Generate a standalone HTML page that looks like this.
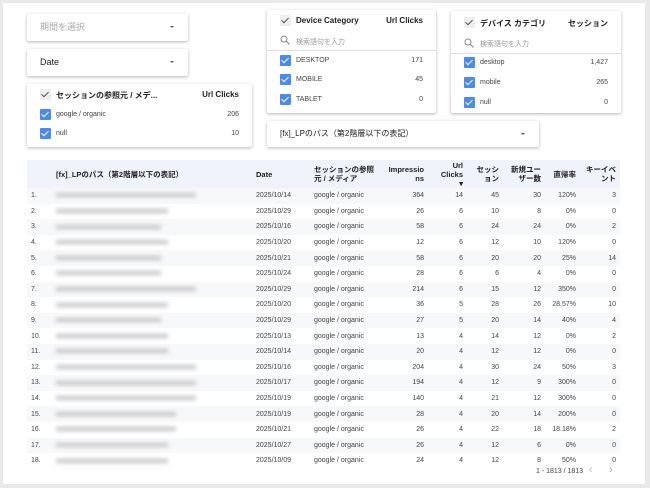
<!DOCTYPE html>
<html><head><meta charset="utf-8"><style>
*{box-sizing:border-box;margin:0;padding:0}
body{width:650px;height:488px;background:#e9e9e9;font-family:"Liberation Sans","Noto Sans CJK JP",sans-serif;position:relative;overflow:hidden;color:#222}
.page{position:absolute;left:3px;top:3px;width:642px;height:481px;background:#fff}
.card{position:absolute;background:#fff;box-shadow:0 1px 3px rgba(0,0,0,.3);border-radius:2px}
.dd{font-size:9px;padding-left:13px;line-height:27px}
.arr{position:absolute;right:14px;top:12px;width:0;height:0;border-left:2px solid transparent;border-right:2px solid transparent;border-top:2px solid #555}
.cb{position:absolute;width:11px;height:11px;background:#4a8af4;border-radius:1px}
.cb::after{content:"";position:absolute;left:3px;top:1px;width:3px;height:6px;border:solid #fff;border-width:0 1px 1px 0;transform:rotate(45deg)}
.hc{position:absolute;width:11px;height:11px;background:#eee}
.hc::after{content:"";position:absolute;left:3px;top:1px;width:3px;height:6px;border:solid #555;border-width:0 1px 1px 0;transform:rotate(45deg)}
.t{position:absolute;font-size:7px;color:#444;white-space:nowrap}
.h{position:absolute;font-size:8px;font-weight:bold;white-space:nowrap}
.s{position:absolute}
table{position:absolute;left:27px;top:160px;width:593px;border-collapse:collapse;font-size:7px;color:#444;table-layout:fixed}
th{background:#eef3fc;font-size:7.5px;color:#222;font-weight:bold;height:28px;text-align:right;padding-right:4px;line-height:9px;white-space:nowrap}
td{height:15.6px;text-align:right;padding-right:4px;white-space:nowrap}
tr:nth-child(even) td{background:#f7f8fa}
td.l,th.l{text-align:left;padding-left:4px}
.b{display:inline-block;height:4px;background:#c4c4c4;filter:blur(2px);vertical-align:middle}
</style></head><body>
<div class="page"></div>
<div class="card dd" style="left:27px;top:14px;width:161px;height:27px;color:#aaa">期間を選択<div class="arr"></div></div>
<div class="card dd" style="left:27px;top:49px;width:161px;height:27px">Date<div class="arr"></div></div>
<div class="card" style="left:27px;top:84px;width:225px;height:63px">
<div class="hc" style="left:13px;top:5px"></div><div class="h" style="left:29px;top:6px">セッションの参照元 / メデ...</div><div class="h" style="right:13px;top:6px">Url Clicks</div>
<div class="cb" style="left:13px;top:25px"></div><div class="t" style="left:29px;top:27px">google / organic</div><div class="t" style="right:13px;top:27px">206</div>
<div class="cb" style="left:13px;top:44px"></div><div class="t" style="left:29px;top:46px">null</div><div class="t" style="right:13px;top:46px">10</div>
</div>
<div class="card" style="left:267px;top:10px;width:169px;height:103px">
<div class="hc" style="left:13px;top:5px"></div><div class="h" style="left:29px;top:6px">Device Category</div><div class="h" style="right:13px;top:6px">Url Clicks</div>
<svg class="s" style="left:13px;top:25px" width="10" height="10" viewBox="0 0 10 10"><circle cx="4" cy="4" r="3" fill="none" stroke="#888" stroke-width="1"/><path d="M6.2 6.2L9.5 9.5" stroke="#888" stroke-width="1.1"/></svg>
<div class="t" style="left:29px;top:27px;color:#999">検索語句を入力</div>
<div style="position:absolute;left:0;right:0;top:40px;border-top:1px solid #ddd"></div>
<div class="cb" style="left:13px;top:45px"></div><div class="t" style="left:29px;top:47px">DESKTOP</div><div class="t" style="right:13px;top:47px">171</div>
<div class="cb" style="left:13px;top:64px"></div><div class="t" style="left:29px;top:66px">MOBILE</div><div class="t" style="right:13px;top:66px">45</div>
<div class="cb" style="left:13px;top:84px"></div><div class="t" style="left:29px;top:86px">TABLET</div><div class="t" style="right:13px;top:86px">0</div>
</div>
<div class="card" style="left:451px;top:11px;width:170px;height:102px">
<div class="hc" style="left:13px;top:6px"></div><div class="h" style="left:29px;top:7px">デバイス カテゴリ</div><div class="h" style="right:13px;top:7px">セッション</div>
<svg class="s" style="left:13px;top:27px" width="10" height="10" viewBox="0 0 10 10"><circle cx="4" cy="4" r="3" fill="none" stroke="#888" stroke-width="1"/><path d="M6.2 6.2L9.5 9.5" stroke="#888" stroke-width="1.1"/></svg>
<div class="t" style="left:29px;top:28px;color:#999">検索語句を入力</div>
<div style="position:absolute;left:0;right:0;top:42px;border-top:1px solid #ddd"></div>
<div class="cb" style="left:13px;top:46px"></div><div class="t" style="left:29px;top:48px">desktop</div><div class="t" style="right:13px;top:48px">1,427</div>
<div class="cb" style="left:13px;top:66px"></div><div class="t" style="left:29px;top:68px">mobile</div><div class="t" style="right:13px;top:68px">265</div>
<div class="cb" style="left:13px;top:86px"></div><div class="t" style="left:29px;top:88px">null</div><div class="t" style="right:13px;top:88px">0</div>
</div>
<div class="card dd" style="left:267px;top:121px;width:272px;height:26px;font-size:8px;line-height:26px">[fx]_LPのパス（第2階層以下の表記）<div class="arr"></div></div>
<table>
<colgroup><col style="width:25px"><col style="width:200px"><col style="width:58px"><col style="width:72px"><col style="width:46px"><col style="width:39px"><col style="width:36px"><col style="width:42px"><col style="width:35px"><col style="width:40px"></colgroup>
<tr><th></th><th class="l">[fx]_LPのパス（第2階層以下の表記）</th><th class="l">Date</th><th class="l">セッションの参照<br>元 / メディア</th><th>Impressio<br>ns</th><th>Url<br>Clicks<br>▾</th><th>セッシ<br>ョン</th><th>新規ユー<br>ザー数</th><th>直帰率</th><th>キーイベ<br>ント</th></tr>
<tr><td class="l">1.</td><td class="l"><span class="b" style="width:140px"></span></td><td class="l">2025/10/14</td><td class="l">google / organic</td><td>364</td><td>14</td><td>45</td><td>30</td><td>120%</td><td>3</td></tr>
<tr><td class="l">2.</td><td class="l"><span class="b" style="width:112px"></span></td><td class="l">2025/10/29</td><td class="l">google / organic</td><td>26</td><td>6</td><td>10</td><td>8</td><td>0%</td><td>0</td></tr>
<tr><td class="l">3.</td><td class="l"><span class="b" style="width:105px"></span></td><td class="l">2025/10/16</td><td class="l">google / organic</td><td>58</td><td>6</td><td>24</td><td>24</td><td>0%</td><td>2</td></tr>
<tr><td class="l">4.</td><td class="l"><span class="b" style="width:112px"></span></td><td class="l">2025/10/20</td><td class="l">google / organic</td><td>12</td><td>6</td><td>12</td><td>10</td><td>120%</td><td>0</td></tr>
<tr><td class="l">5.</td><td class="l"><span class="b" style="width:105px"></span></td><td class="l">2025/10/21</td><td class="l">google / organic</td><td>58</td><td>6</td><td>20</td><td>20</td><td>25%</td><td>14</td></tr>
<tr><td class="l">6.</td><td class="l"><span class="b" style="width:105px"></span></td><td class="l">2025/10/24</td><td class="l">google / organic</td><td>28</td><td>6</td><td>6</td><td>4</td><td>0%</td><td>0</td></tr>
<tr><td class="l">7.</td><td class="l"><span class="b" style="width:140px"></span></td><td class="l">2025/10/29</td><td class="l">google / organic</td><td>214</td><td>6</td><td>15</td><td>12</td><td>350%</td><td>0</td></tr>
<tr><td class="l">8.</td><td class="l"><span class="b" style="width:112px"></span></td><td class="l">2025/10/20</td><td class="l">google / organic</td><td>36</td><td>5</td><td>28</td><td>26</td><td>28.57%</td><td>10</td></tr>
<tr><td class="l">9.</td><td class="l"><span class="b" style="width:105px"></span></td><td class="l">2025/10/29</td><td class="l">google / organic</td><td>27</td><td>5</td><td>20</td><td>14</td><td>40%</td><td>4</td></tr>
<tr><td class="l">10.</td><td class="l"><span class="b" style="width:112px"></span></td><td class="l">2025/10/13</td><td class="l">google / organic</td><td>13</td><td>4</td><td>14</td><td>12</td><td>0%</td><td>2</td></tr>
<tr><td class="l">11.</td><td class="l"><span class="b" style="width:112px"></span></td><td class="l">2025/10/14</td><td class="l">google / organic</td><td>20</td><td>4</td><td>12</td><td>12</td><td>0%</td><td>0</td></tr>
<tr><td class="l">12.</td><td class="l"><span class="b" style="width:140px"></span></td><td class="l">2025/10/16</td><td class="l">google / organic</td><td>204</td><td>4</td><td>30</td><td>24</td><td>50%</td><td>3</td></tr>
<tr><td class="l">13.</td><td class="l"><span class="b" style="width:140px"></span></td><td class="l">2025/10/17</td><td class="l">google / organic</td><td>194</td><td>4</td><td>12</td><td>9</td><td>300%</td><td>0</td></tr>
<tr><td class="l">14.</td><td class="l"><span class="b" style="width:140px"></span></td><td class="l">2025/10/19</td><td class="l">google / organic</td><td>140</td><td>4</td><td>21</td><td>12</td><td>300%</td><td>0</td></tr>
<tr><td class="l">15.</td><td class="l"><span class="b" style="width:120px"></span></td><td class="l">2025/10/19</td><td class="l">google / organic</td><td>28</td><td>4</td><td>20</td><td>14</td><td>200%</td><td>0</td></tr>
<tr><td class="l">16.</td><td class="l"><span class="b" style="width:120px"></span></td><td class="l">2025/10/21</td><td class="l">google / organic</td><td>26</td><td>4</td><td>22</td><td>18</td><td>18.18%</td><td>2</td></tr>
<tr><td class="l">17.</td><td class="l"><span class="b" style="width:112px"></span></td><td class="l">2025/10/27</td><td class="l">google / organic</td><td>26</td><td>4</td><td>12</td><td>6</td><td>0%</td><td>0</td></tr>
<tr><td class="l">18.</td><td class="l"><span class="b" style="width:112px"></span></td><td class="l">2025/10/09</td><td class="l">google / organic</td><td>24</td><td>4</td><td>12</td><td>8</td><td>50%</td><td>0</td></tr>
</table>
<div class="t" style="left:534px;top:468px;font-size:7px;background:#fff;padding:0 2px">1 - 1813 / 1813</div>
<div class="t" style="left:589px;top:464px;font-size:11px;color:#bbb">&lsaquo;</div>
<div class="t" style="left:609px;top:464px;font-size:11px;color:#999">&rsaquo;</div>
</body></html>
